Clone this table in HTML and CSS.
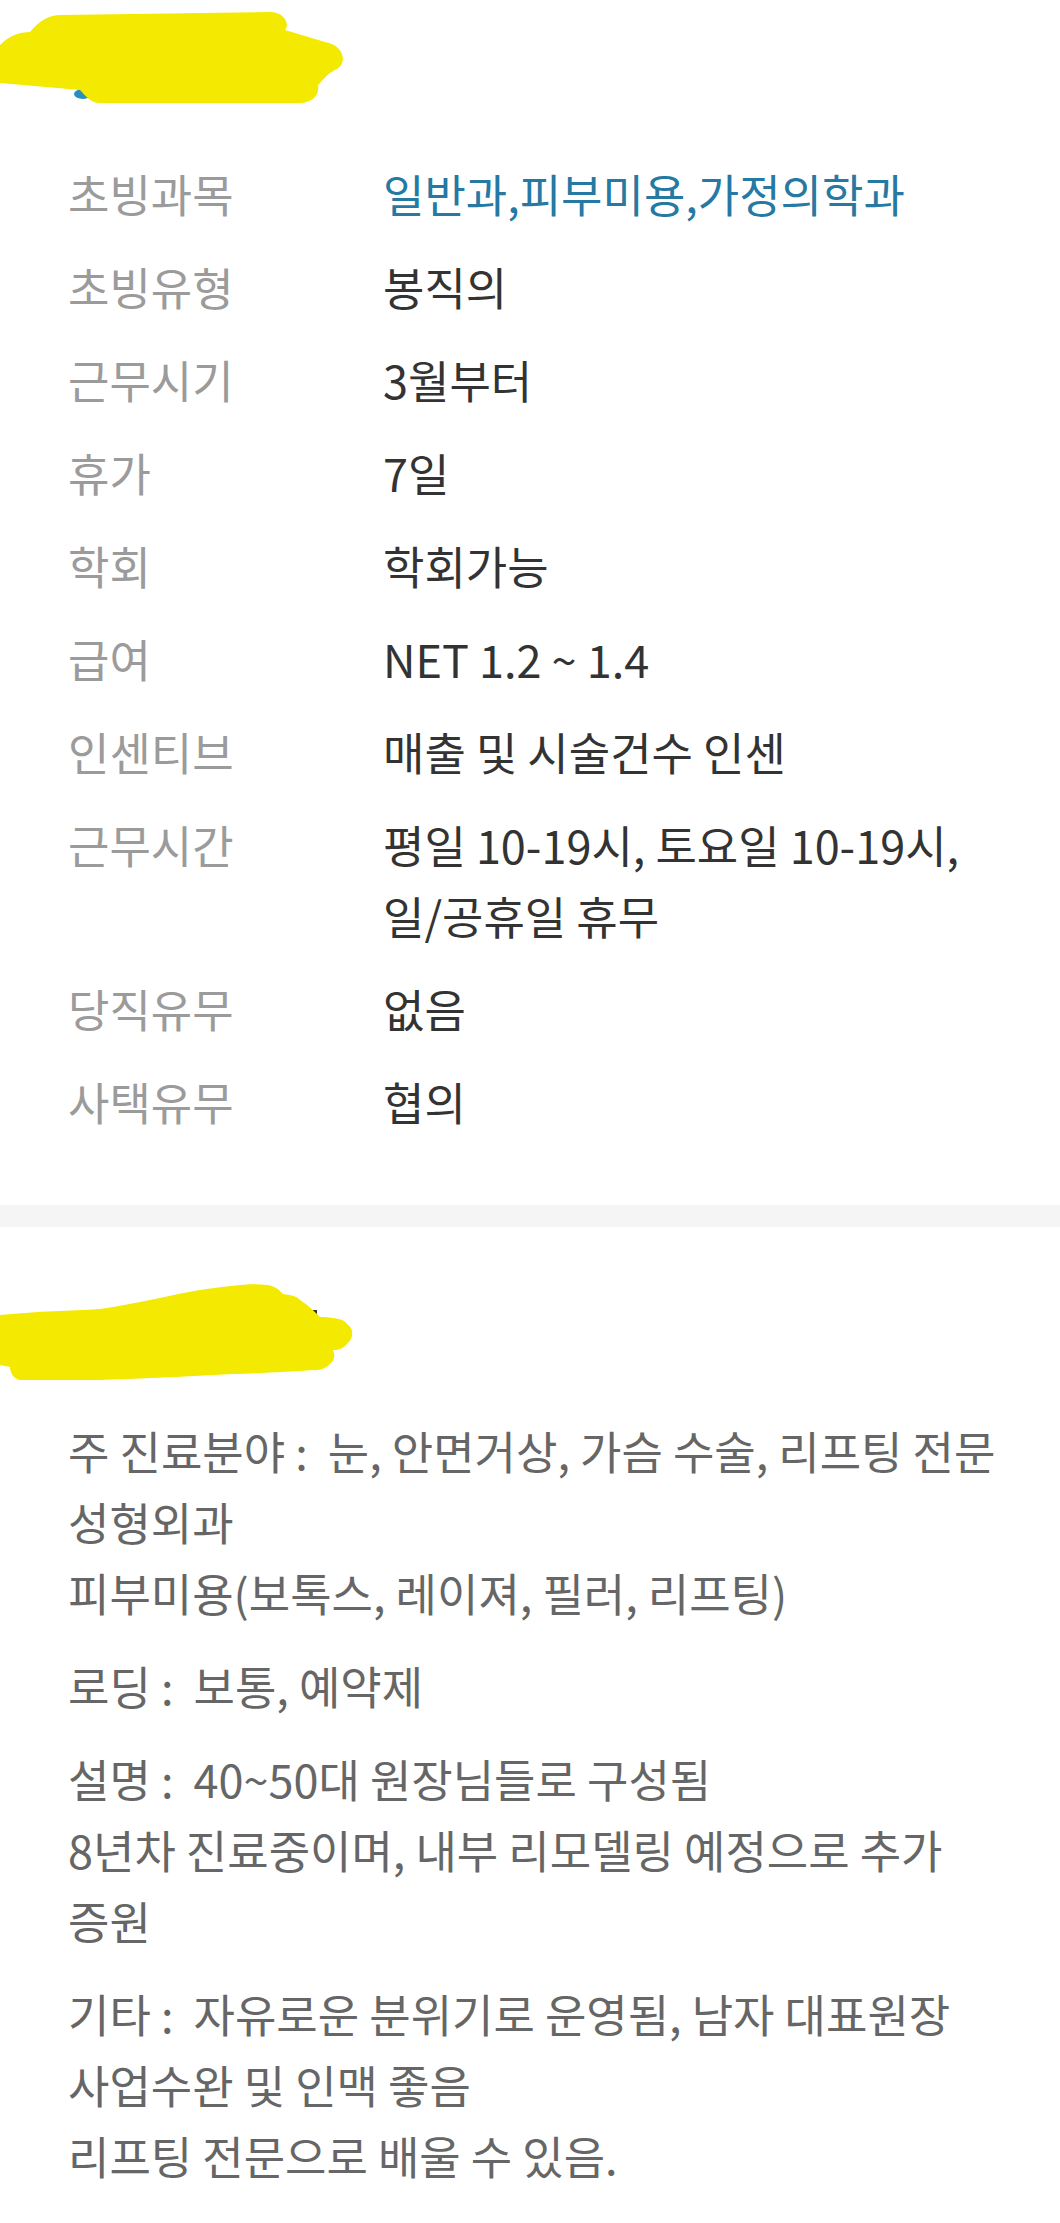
FILE: index.html
```html
<!DOCTYPE html>
<html>

<head>
  <meta charset="utf-8">
  <meta name="viewport" content="width=device-width, initial-scale=1">
  <link rel="stylesheet" href="styles.css">
</head>

<body>
  <div class="section">
    <!-- hidden hospital name -->
    <svg class="cover" width="360" height="120" viewBox="0 0 360 120">
      <ellipse cx="83" cy="94" rx="9" ry="5" fill="#2a8fc0" />
      <ellipse cx="205" cy="95" rx="11" ry="4" fill="#333" />
      <path fill="#f4e900" d="M0,45 C10,35 20,32 30,32 C40,20 50,15 60,15 L270,12 C285,12 290,25 285,30 L325,42 C345,45 348,65 335,70 C325,75 322,82 318,85 C320,95 312,103 300,103 L100,103 C90,103 85,95 80,90 L0,83 Z" />
    </svg>

    <div class="rows">
      <div class="row">
        <div class="label">초빙과목</div>
        <div class="value link">일반과,피부미용,가정의학과</div>
      </div>
      <div class="row">
        <div class="label">초빙유형</div>
        <div class="value">봉직의</div>
      </div>
      <div class="row">
        <div class="label">근무시기</div>
        <div class="value">3월부터</div>
      </div>
      <div class="row">
        <div class="label">휴가</div>
        <div class="value">7일</div>
      </div>
      <div class="row">
        <div class="label">학회</div>
        <div class="value">학회가능</div>
      </div>
      <div class="row">
        <div class="label">급여</div>
        <div class="value">NET 1.2 ~ 1.4</div>
      </div>
      <div class="row">
        <div class="label">인센티브</div>
        <div class="value">매출 및 시술건수 인센</div>
      </div>
      <div class="row">
        <div class="label">근무시간</div>
        <div class="value">평일 10-19시, 토요일 10-19시, 일/공휴일 휴무</div>
      </div>
      <div class="row">
        <div class="label">당직유무</div>
        <div class="value">없음</div>
      </div>
      <div class="row">
        <div class="label">사택유무</div>
        <div class="value">협의</div>
      </div>
    </div>
  </div>

  <div class="divider"></div>

  <div class="section">
    <svg class="cover cover2" width="360" height="120" viewBox="0 0 360 120">
      <rect x="309" y="43" width="8" height="8" fill="#333" />
      <path fill="#f4e900" d="M0,48 C40,44 70,44 100,42 C140,36 170,28 200,23 C230,19 250,16 267,18 C276,19 280,24 283,27 C292,28 298,30 300,33 C308,38 315,45 320,50 C332,50 345,52 347,57 C355,62 353,72 347,77 C343,82 338,83 333,83 C336,90 333,95 330,97 C325,102 318,104 313,103 C290,105 260,106 233,107 C180,110 130,112 100,113 L20,113 C14,112 10,106 10,100 L0,98 Z" />
    </svg>

    <div class="desc">
      <p>주 진료분야 :&nbsp; 눈, 안면거상, 가슴 수술, 리프팅 전문 성형외과<br>피부미용(보톡스, 레이져, 필러, 리프팅)</p>
      <p>로딩 :&nbsp; 보통, 예약제</p>
      <p>설명 :&nbsp; 40~50대 원장님들로 구성됨<br>8년차 진료중이며, 내부 리모델링 예정으로 추가 증원</p>
      <p>기타 :&nbsp; 자유로운 분위기로 운영됨, 남자 대표원장 사업수완 및 인맥 좋음<br>리프팅 전문으로 배울 수 있음.</p>
    </div>
  </div>
</body>

</html>
```

FILE: styles.css
```css
* {
  box-sizing: border-box;
}

body {
  margin: 0;
  background-color: white;
  font-family: "Noto Sans CJK KR", "Noto Sans", sans-serif;
  font-size: 45px;
  line-height: 71px;
  word-break: keep-all;
}

.cover {
  display: block;
}

.cover2 {
  margin-top: 40px;
}

/* info table */
.rows {
  padding: 38px 50px 68px 68px;
}

.row {
  display: grid;
  grid-template-columns: 315px 1fr;
  margin-bottom: 22px;
}

.row:last-child {
  margin-bottom: 0;
}

.label {
  color: #9b9b9b;
}

.value {
  color: #333;
}

.link {
  color: #2679a2;
}

/* grey band between the two blocks */
.divider {
  height: 22px;
  background-color: #f5f5f5;
}

.desc {
  padding: 28px 40px 40px 68px;
  color: #666;
}

.desc p {
  margin: 0 0 22px 0;
}
```
